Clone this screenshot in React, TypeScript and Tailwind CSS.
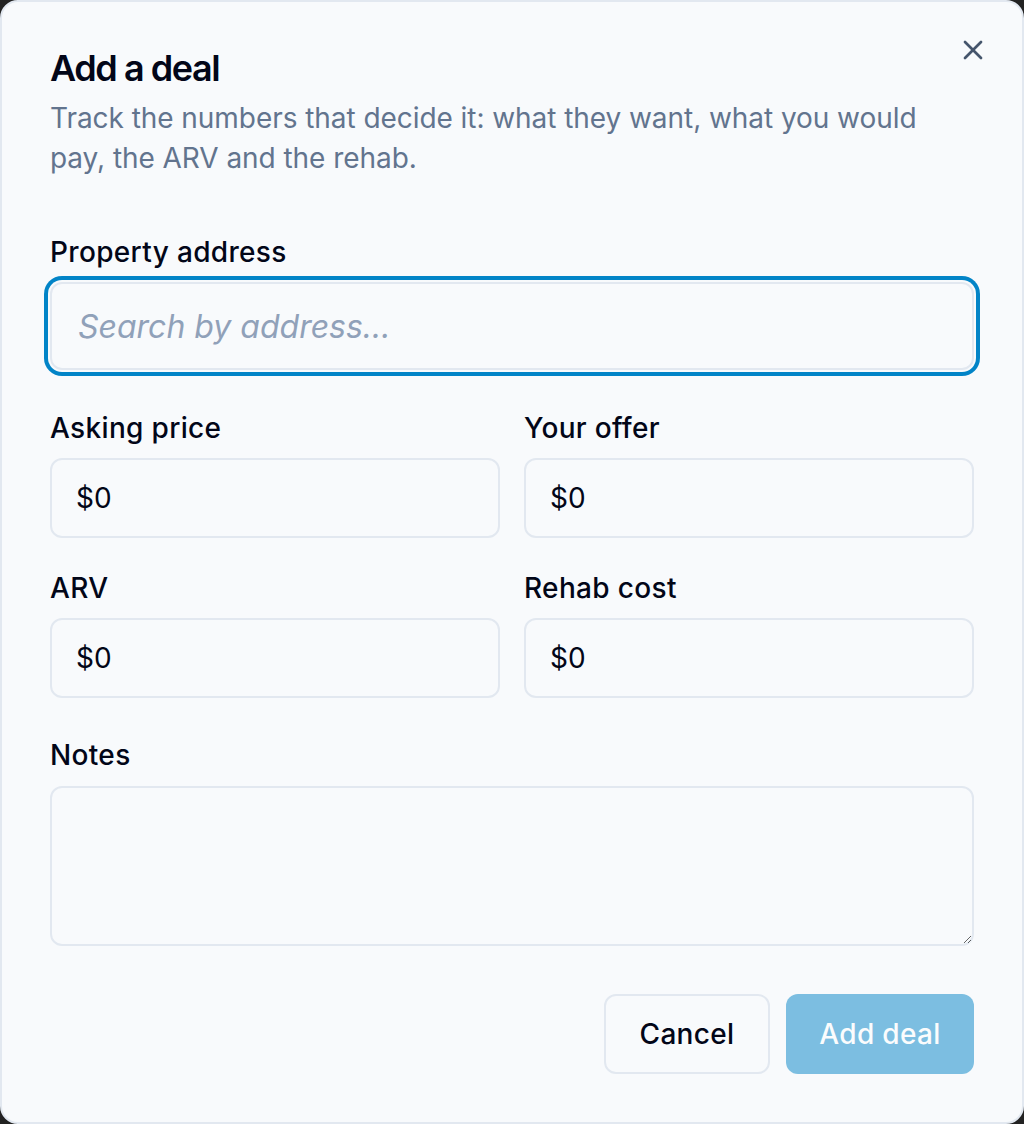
import { X } from 'lucide-react';

const inputBase =
  'w-full rounded-xl border-2 border-slate-200 bg-slate-50 px-6 text-[28px] text-slate-950 outline-none placeholder:text-slate-400';

const labelCls = 'pt-px text-[28px] font-medium leading-[28px] tracking-[0.012em] text-slate-950';

function Field({ label, value }: { label: string; value: string }) {
  return (
    <div className="flex flex-col">
      <label className={labelCls}>{label}</label>
      <input readOnly value={value} className={`${inputBase} mt-4 h-[80px]`} />
    </div>
  );
}

export default function App() {
  return (
    <div className="min-h-screen w-full bg-[#222222]" style={{ fontFamily: 'Inter, "Noto Sans", sans-serif' }}>
      <div className="relative flex h-[1124px] w-full flex-col rounded-[18px] border-2 border-slate-200 bg-slate-50 p-12">
        <button className="absolute right-[33px] top-[32px] text-slate-600">
          <X className="h-8 w-8" strokeWidth={2} />
        </button>

        <h2 className="text-[36px] font-semibold leading-none tracking-[-0.04em] text-slate-950">Add a deal</h2>
        <p className="mt-3 text-[28px] leading-[40px] tracking-[-0.002em] text-slate-500">
          Track the numbers that decide it: what they want, what you would pay, the ARV and the rehab.
        </p>

        <div className="mt-[59px] flex flex-col">
          <label className={labelCls}>Property address</label>
          <input
            placeholder="Search by address..."
            className={`${inputBase} mt-4 h-[88px] rounded-[14px] pl-[26px] text-[32px] ring-4 ring-[#0284c7] ring-offset-2 ring-offset-slate-50 placeholder:italic`}
          />
        </div>

        <div className="mt-[43px] grid grid-cols-2 gap-x-6">
          <Field label="Asking price" value="$0" />
          <Field label="Your offer" value="$0" />
          <div className="mt-[35px]">
            <Field label="ARV" value="$0" />
          </div>
          <div className="mt-[35px]">
            <Field label="Rehab cost" value="$0" />
          </div>
        </div>

        <div className="mt-[42px] flex flex-col">
          <label className={labelCls}>Notes</label>
          <textarea className={`${inputBase} mt-[17px] h-[160px] py-4`} />
        </div>

        <div className="mt-12 flex justify-end gap-4">
          <button className="h-[80px] w-[166px] rounded-xl border-2 border-slate-200 bg-slate-50 text-[28px] font-medium tracking-[0.012em] text-slate-950">
            Cancel
          </button>
          <button
            disabled
            className="h-[80px] w-[188px] rounded-xl bg-[#0284c7] text-[28px] font-medium tracking-[0.012em] text-white opacity-50"
          >
            Add deal
          </button>
        </div>
      </div>
    </div>
  );
}
